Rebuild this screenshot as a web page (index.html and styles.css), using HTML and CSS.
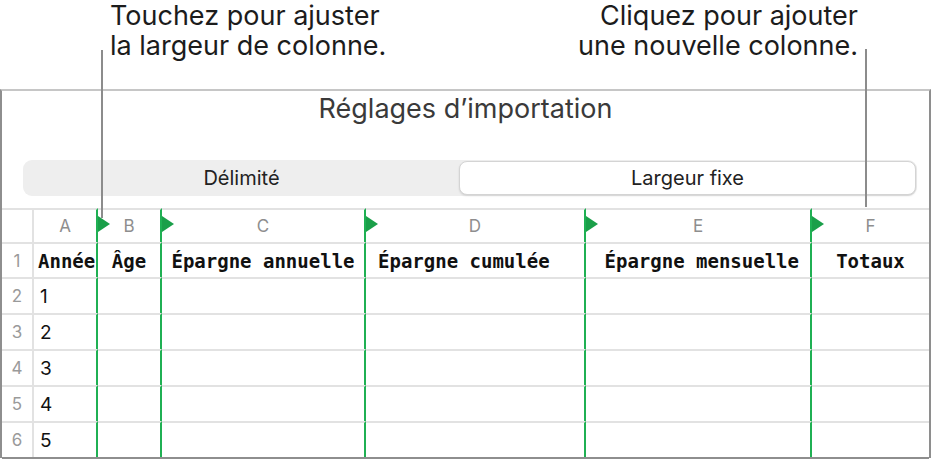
FILE: index.html
```html
<!DOCTYPE html>
<html lang="fr">

<head>
    <meta charset="UTF-8">
    <meta name="viewport" content="width=device-width, initial-scale=1.0">
    <title>Réglages d’importation</title>
    <link rel="stylesheet" href="styles.css">
</head>

<body>
    <div class="page">
        <!-- callouts above the dialog -->
        <div class="notes">
            <p class="note note-left">Touchez pour ajuster<br>la largeur de colonne.</p>
            <p class="note note-right">Cliquez pour ajouter<br>une nouvelle colonne.</p>
        </div>
        <span class="pointer pointer-left"></span>
        <span class="pointer pointer-right"></span>

        <div class="panel">
            <h1 class="panel-title">Réglages d’importation</h1>

            <div class="segmented">
                <div class="segment">Délimité</div>
                <div class="segment segment-active">Largeur fixe</div>
            </div>

            <div class="sheet">
                <div class="row row-letters">
                    <div class="cell num"></div>
                    <div class="cell letter">A</div>
                    <div class="cell letter marked">B</div>
                    <div class="cell letter marked">C</div>
                    <div class="cell letter marked">D</div>
                    <div class="cell letter marked">E</div>
                    <div class="cell letter marked">F</div>
                </div>

                <div class="row row-head">
                    <div class="cell num">1</div>
                    <div class="cell head">Année</div>
                    <div class="cell head center">Âge</div>
                    <div class="cell head center">Épargne annuelle</div>
                    <div class="cell head wide">Épargne cumulée</div>
                    <div class="cell head right">Épargne mensuelle</div>
                    <div class="cell head center">Totaux</div>
                </div>

                <div class="row">
                    <div class="cell num">2</div>
                    <div class="cell data">1</div>
                    <div class="cell"></div><div class="cell"></div><div class="cell"></div><div class="cell"></div><div class="cell"></div>
                </div>
                <div class="row">
                    <div class="cell num">3</div>
                    <div class="cell data">2</div>
                    <div class="cell"></div><div class="cell"></div><div class="cell"></div><div class="cell"></div><div class="cell"></div>
                </div>
                <div class="row">
                    <div class="cell num">4</div>
                    <div class="cell data">3</div>
                    <div class="cell"></div><div class="cell"></div><div class="cell"></div><div class="cell"></div><div class="cell"></div>
                </div>
                <div class="row">
                    <div class="cell num">5</div>
                    <div class="cell data">4</div>
                    <div class="cell"></div><div class="cell"></div><div class="cell"></div><div class="cell"></div><div class="cell"></div>
                </div>
                <div class="row">
                    <div class="cell num">6</div>
                    <div class="cell data">5</div>
                    <div class="cell"></div><div class="cell"></div><div class="cell"></div><div class="cell"></div><div class="cell"></div>
                </div>
            </div>
        </div>
    </div>
</body>

</html>
```

FILE: styles.css
```css
        body {
            margin: 0;
            padding: 0;
            background: #fff;
            font-family: Inter, "Noto Sans", sans-serif;
            color: #1c1c1c;
        }

        .page {
            position: relative;
            width: 931px;
            height: 460px;
            overflow: hidden;
        }

        .notes {
            display: flex;
            justify-content: space-between;
            height: 89px;
        }

        .note {
            margin: 0;
            padding-top: 1px;
            font-size: 27px;
            line-height: 30px;
            color: #1c1c1c;
        }

        .note-left {
            margin-left: 110px;
        }

        .note-right {
            margin-right: 73px;
            text-align: right;
        }

        .pointer {
            position: absolute;
            width: 2px;
            background: #8c8c8c;
            z-index: 5;
        }

        .pointer-left {
            left: 101px;
            top: 50px;
            height: 168px;
        }

        .pointer-right {
            left: 865px;
            top: 49px;
            height: 158px;
        }

        .panel {
            border: 2px solid #8e8e8e;
            border-top: 2px solid #c6c6c6;
            border-bottom: none;
            height: 369px;
            box-sizing: border-box;
        }

        .panel-title {
            margin: 3px 0 0;
            font-size: 27px;
            line-height: 30px;
            font-weight: 400;
            text-align: center;
            color: #3a3a3a;
        }

        .segmented {
            display: flex;
            height: 34px;
            margin: 36px 12px 0 21px;
            padding: 1px;
            background: #eeeeee;
            border-radius: 9px;
        }

        .segment {
            flex: 0 0 435px;
            display: flex;
            align-items: center;
            justify-content: center;
            font-size: 20px;
            color: #222;
        }

        .segment-active {
            flex: 1;
            background: #fff;
            border: 1px solid #d4d4d4;
            border-radius: 8px;
            box-shadow: 0 1px 2px rgba(0, 0, 0, 0.12);
        }

        .sheet {
            margin-top: 12px;
            border-bottom: 2px solid #8e8e8e;
        }

        .row {
            display: grid;
            grid-template-columns: 32px 64px 64px 204px 220px 226px 1fr;
            height: 36px;
        }

        .row-letters {
            height: 34px;
        }

        .row-head {
            height: 35px;
        }

        .cell {
            position: relative;
            display: flex;
            align-items: center;
            border-top: 2px solid #e2e2e2;
            border-right: 2px solid #1fb053;
            white-space: nowrap;
        }

        .cell:last-child {
            border-right: none;
        }

        .cell.num {
            justify-content: center;
            border-right: 2px solid #e2e2e2;
            font-size: 17px;
            color: #9a9a9a;
        }

        .letter {
            justify-content: center;
            font-size: 17px;
            color: #8e8e8e;
        }

        .marked::before {
            content: "";
            position: absolute;
            left: 0;
            top: 6px;
            border-left: 12px solid #1a9f49;
            border-top: 8.5px solid transparent;
            border-bottom: 8.5px solid transparent;
        }

        .head {
            font-family: "DejaVu Sans Mono", "Liberation Mono", monospace;
            font-weight: bold;
            font-size: 19px;
            color: #111;
            padding-left: 4px;
        }

        .head.center {
            justify-content: center;
            padding: 0;
        }

        .head.wide {
            padding-left: 12px;
        }

        .head.right {
            justify-content: flex-end;
            padding: 0 11px 0 0;
        }

        .data {
            padding-left: 6px;
            font-size: 19px;
            color: #111;
        }
```
